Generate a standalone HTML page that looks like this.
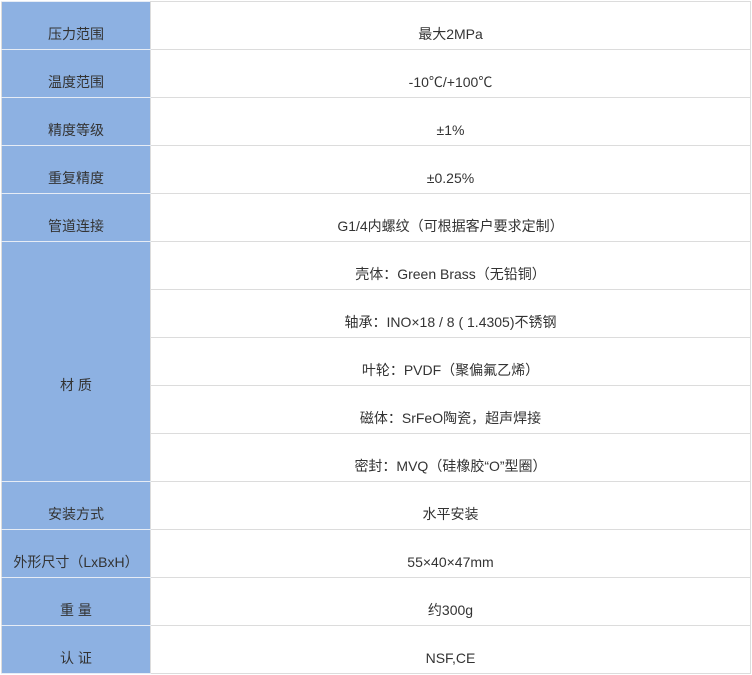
<!DOCTYPE html><html><head><meta charset="utf-8"><style>
body{margin:0;background:#fff;width:752px;height:675px;overflow:hidden;font-family:"Liberation Sans","Noto Sans CJK SC",sans-serif;font-size:14px;color:#333}
table{position:absolute;left:1px;top:1px;border-collapse:collapse;table-layout:fixed;width:750px}
td{border:1px solid #dcdcdc;height:48px;padding:24px 0 0 0;box-sizing:border-box;text-align:center;vertical-align:top;line-height:16px;white-space:nowrap}
td.h{background:#8db1e2;border-color:#e6ecf5 #dcdcdc #e6ecf5 #dcdcdc;width:149px}
td.m{padding-top:135px}
tr{height:48px}
</style></head><body><table>
<tr><td class="h">压力范围</td><td>最大2MPa</td></tr>
<tr><td class="h">温度范围</td><td>-10℃/+100℃</td></tr>
<tr><td class="h">精度等级</td><td>±1%</td></tr>
<tr><td class="h">重复精度</td><td>±0.25%</td></tr>
<tr><td class="h">管道连接</td><td>G1/4内螺纹（可根据客户要求定制）</td></tr>
<tr><td class="h m" rowspan="5">材 质</td><td>壳体：Green Brass（无铅铜）</td></tr>
<tr><td>轴承：INO×18 / 8 ( 1.4305)不锈钢</td></tr>
<tr><td>叶轮：PVDF（聚偏氟乙烯）</td></tr>
<tr><td>磁体：SrFeO陶瓷，超声焊接</td></tr>
<tr><td>密封：MVQ（硅橡胶“O”型圈）</td></tr>
<tr><td class="h">安装方式</td><td>水平安装</td></tr>
<tr><td class="h">外形尺寸（LxBxH）</td><td>55×40×47mm</td></tr>
<tr><td class="h">重 量</td><td>约300g</td></tr>
<tr><td class="h">认 证</td><td>NSF,CE</td></tr>
</table></body></html>
